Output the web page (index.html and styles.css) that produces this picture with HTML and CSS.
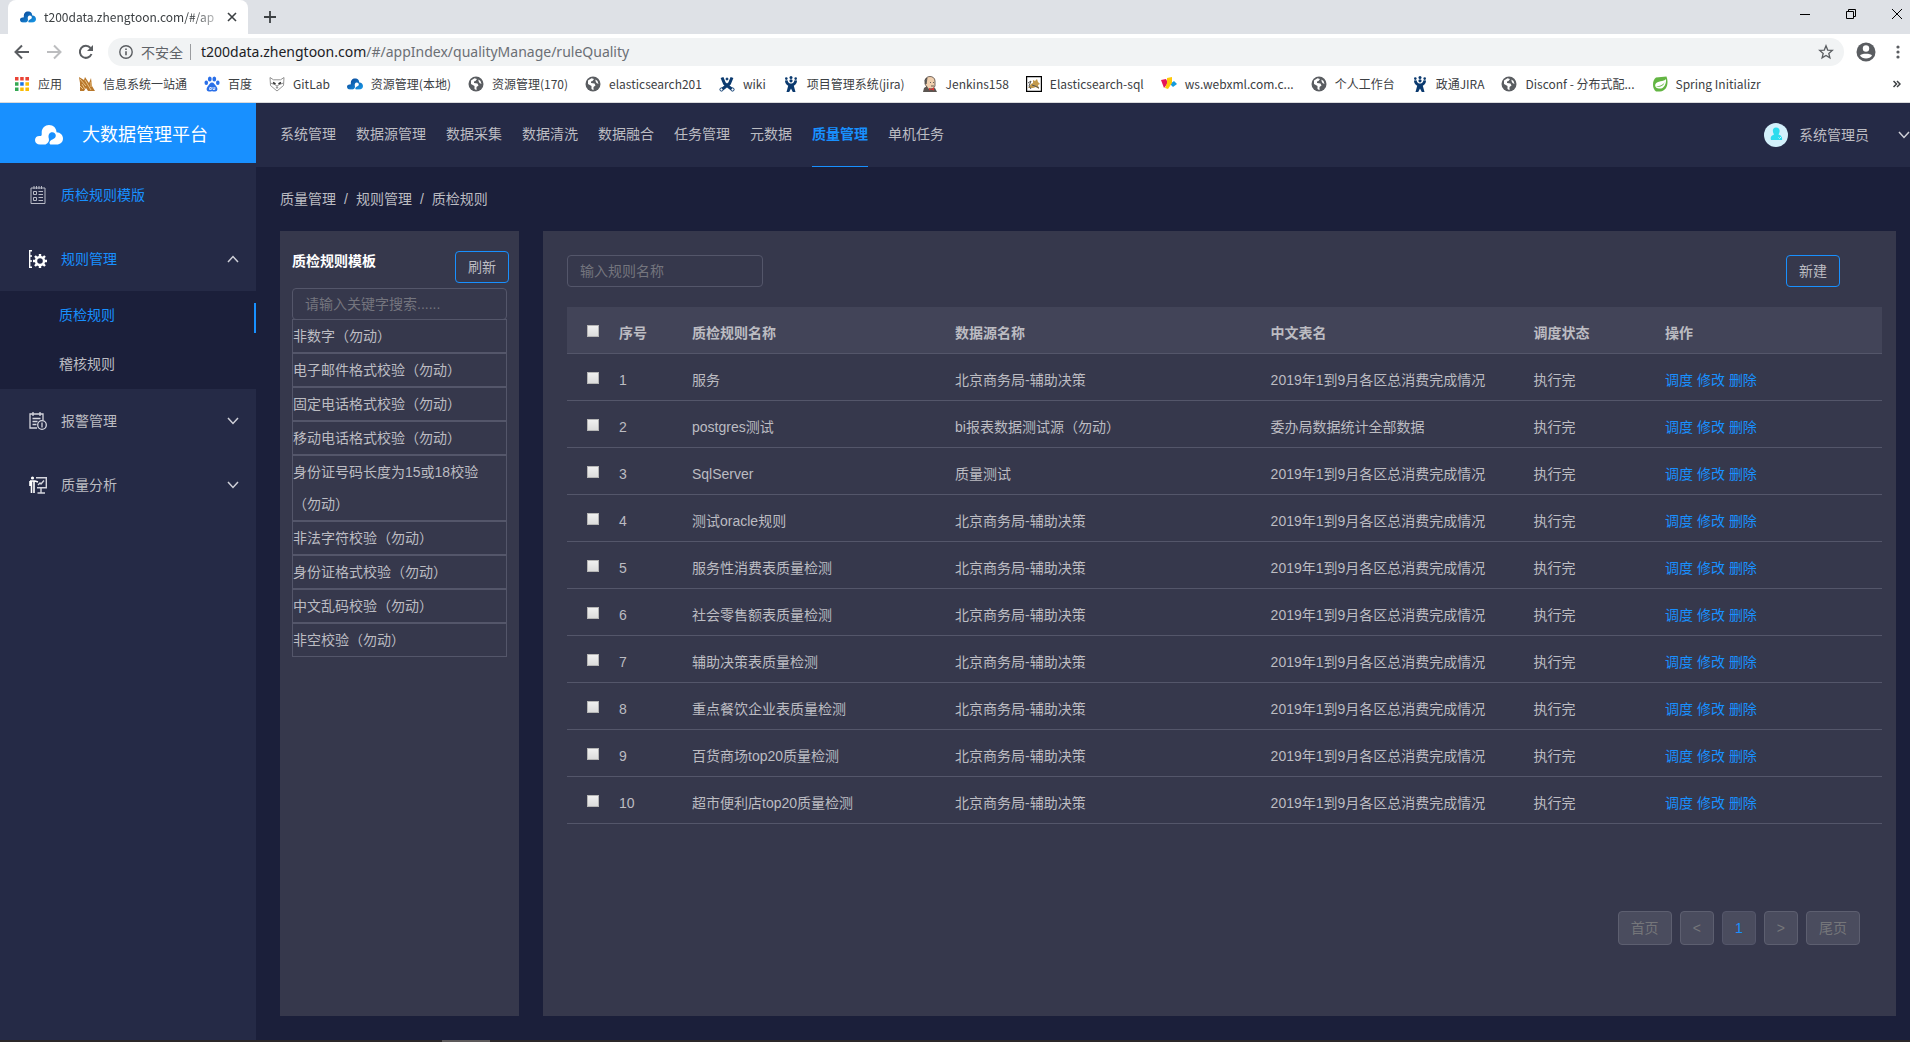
FILE: index.html
```html
<!DOCTYPE html>
<html lang="zh-CN">
<head>
<meta charset="utf-8">
<title>大数据管理平台</title>
<link rel="stylesheet" href="styles.css">
</head>
<body>
<svg class="defs" width="0" height="0" aria-hidden="true">
  <defs>
    <linearGradient id="blue" x1="0" y1="0" x2="1" y2="1"><stop offset="0" stop-color="#0b3f8f"/><stop offset="1" stop-color="#189bea"/></linearGradient>
    <symbol id="cloud" viewBox="0 0 28 20">
      <path fill-rule="evenodd" d="M14 0c4.400 0 7.500 3.200 7.500 7.200C25.500 7.500 28 10 28 13.500c0 3.500-2.500 6-6.500 6H5c-3 0-5-1.700-5-4.500c0-2.500 2-4.200 4.800-4c1.200 0 1.900-.5 1.900-1.500V7C7 3 10 0 14 0zM10.500 19.600c3-1.600 4-3.600 3.300-6.300c-1-3.500.8-6.300 3.700-6.100c3.200.3 4.300 3.800 2.300 5.800c-2 1.800-4.300 1.500-5.300 4.500c-.2.800.3 1.500 1 2.100z"/>
    </symbol>
    <symbol id="globe" viewBox="0 0 16 16">
      <circle cx="8" cy="8" r="7.500" fill="#5a5d61"/>
      <path d="M3 4.500L6.500 2.300L9 3L7.500 5L6 5.500V7l3.500.5l1 2L8.500 11v3.200L6.500 13V10L3 8zM10.500 3.500l2 1.500l1 3l-2-1l-1-2z" fill="#fff"/>
    </symbol>
    <symbol id="jira" viewBox="0 0 16 16">
      <g fill="#0b3a6f"><circle cx="3.300" cy="2.600" r="1.300"/><circle cx="8" cy="1.500" r="1.500"/><circle cx="12.700" cy="2.600" r="1.300"/><circle cx="8" cy="4.800" r="1.600"/>
      <path d="M2 4.500l2.500-.3C5 7 7 7.600 8 7.600S11 7 11.500 4.200l2.500.3c0 2.500-1 4-3.200 5.300L12.500 16H9.800L8 12.500L6.200 16H3.500l1.700-6.200C3 8.500 2 7 2 4.500z"/></g>
    </symbol>
    <symbol id="down" viewBox="0 0 12 8"><path d="M1 1l5 5.500L11 1" fill="none" stroke="currentColor" stroke-width="1.500"/></symbol>
  </defs>
</svg>
<div class="window">
  <div class="tabs">
    <div class="tab">
      <svg class="i16" viewBox="0 0 28 20" fill="url(#blue)"><use href="#cloud"/></svg>
      <span class="tab-title">t200data.zhengtoon.com/#/ap</span>
      <button class="plain" aria-label="关闭标签页"><svg width="10" height="10" viewBox="0 0 10 10"><path d="M1 1l8 8M9 1L1 9" stroke="#3c4043" stroke-width="1.600"/></svg></button>
    </div>
    <button class="plain" aria-label="新标签页"><svg width="12" height="12" viewBox="0 0 12 12"><path d="M6 0v12M0 6h12" stroke="#3c4043" stroke-width="1.800"/></svg></button>
    <div class="controls">
      <button class="plain" aria-label="最小化"><svg width="10" height="10" viewBox="0 0 10 10"><path d="M0 5.500h10" stroke="#000"/></svg></button>
      <button class="plain" aria-label="还原"><svg width="10" height="10" viewBox="0 0 10 10" fill="none" stroke="#000"><path d="M.5 2.500h7v7h-7zM2.500 2V.5h7v7H8"/></svg></button>
      <button class="plain" aria-label="关闭"><svg width="10" height="10" viewBox="0 0 10 10"><path d="M0 0l10 10M10 0L0 10" stroke="#000"/></svg></button>
    </div>
  </div>
  <div class="toolbar">
    <button class="plain" aria-label="后退"><svg width="16" height="16" viewBox="0 0 16 16" fill="none" stroke="#5a5d61" stroke-width="2"><path d="M15 8H2M8 1.500L1.500 8L8 14.500"/></svg></button>
    <button class="plain" aria-label="前进"><svg width="16" height="16" viewBox="0 0 16 16" fill="none" stroke="#bcbdbf" stroke-width="2"><path d="M1 8h13M8 1.500L14.500 8L8 14.500"/></svg></button>
    <button class="plain" aria-label="重新加载"><svg width="16" height="16" viewBox="0 0 16 16"><path d="M13.500 10A6 6 0 1 1 12.500 4" fill="none" stroke="#5a5d61" stroke-width="2"/><path d="M15 1v6H9z" fill="#5a5d61"/></svg></button>
    <div class="omnibox">
      <svg width="14" height="14" viewBox="0 0 14 14"><circle cx="7" cy="7" r="6.200" fill="none" stroke="#5a5d61" stroke-width="1.400"/><path d="M7 6.200v4M7 3.500v1.500" stroke="#5a5d61" stroke-width="1.600"/></svg>
      <span class="insecure">不安全</span>
      <span class="url"><b>t200data.zhengtoon.com</b>/#/appIndex/qualityManage/ruleQuality</span>
      <button class="plain star" aria-label="收藏"><svg width="16" height="16" viewBox="0 0 16 16"><path d="M8 1.800l1.700 4.300l4.600.3l-3.500 3l1.100 4.500L8 11.400l-3.900 2.500l1.100-4.500l-3.500-3l4.600-.3z" fill="none" stroke="#5a5d61" stroke-width="1.300"/></svg></button>
    </div>
    <button class="plain" aria-label="用户"><svg width="20" height="20" viewBox="0 0 20 20"><circle cx="10" cy="10" r="9.500" fill="#5a5d61"/><circle cx="10" cy="6.500" r="3.200" fill="#fff"/><path d="M4 13.500c1-2.500 11-2.500 12 0c-2 4-10 4-12 0z" fill="#fff"/></svg></button>
    <button class="plain" aria-label="菜单"><svg width="4" height="14" viewBox="0 0 4 14" fill="#5a5d61"><circle cx="2" cy="2" r="1.600"/><circle cx="2" cy="7" r="1.600"/><circle cx="2" cy="12" r="1.600"/></svg></button>
  </div>
  <nav class="bookmarks" aria-label="书签">
    <a href="#"><svg class="i16" viewBox="0 0 16 16"><path fill="#ea4335" d="M1 1h3.500v3.500H1zM6.200 1h3.500v3.500H6.200zM11.400 1H15v3.500h-3.600z"/><path fill="#34a853" d="M1 6.200h3.500v3.500H1zM1 11.400h3.500V15H1z"/><path fill="#1a73e8" d="M6.200 6.200h3.500v3.500H6.200z"/><path fill="#fbbc04" d="M11.400 6.200H15v3.500h-3.600zM6.200 11.400h3.500V15H6.200zM11.400 11.400H15V15h-3.600z"/></svg>应用</a>
    <a href="#"><svg class="i16" viewBox="0 0 16 16"><path d="M1 15V7L0 1l5 3L6 1l4 6l2-5l1 8l3 5H9L7 12l-2 3z" fill="#b9782b"/><path d="M1 3l6 7M3 8l3 5M6 4l6 10M12 6v5M1 10l3 3" stroke="#f4d6a0" stroke-width=".8"/></svg>信息系统一站通</a>
    <a href="#"><svg class="i16" viewBox="0 0 16 16" fill="#2a6fe8"><ellipse cx="5.800" cy="3" rx="1.900" ry="2.500"/><ellipse cx="10.300" cy="3" rx="1.900" ry="2.500"/><ellipse cx="2.300" cy="6.700" rx="1.800" ry="2.300"/><ellipse cx="13.800" cy="6.700" rx="1.800" ry="2.300"/><path d="M8 6.500c2 0 2.500 2 4 3.500s2.500 5-1 5.500c-1.500 0-2-.3-3-.3s-1.500.3-3 .3c-3.500-.5-2.500-4-1-5.500S6 6.500 8 6.500z"/><path d="M5.800 11.500h1.500v2H5.500zM9 11v2.500h1.800V11" fill="none" stroke="#fff" stroke-width=".8"/></svg>百度</a>
    <a href="#"><svg class="i16" viewBox="0 0 16 16" fill="none" stroke="#888" stroke-width=".9"><path d="M1 1.500l3.500 2.300h7L15 1.500l-.5 8L8 15L1.500 9.500zM1.500 7l4 1.500L8 10l2.500-1.500l4-1.500M7 11h2l-1 1.500z"/><path d="M4 6.500l2.500 1.500M12 6.500L9.500 8" stroke="#333" stroke-width="1.500"/></svg>GitLab</a>
    <a href="#"><svg class="i16" viewBox="0 0 28 20" fill="url(#blue)"><use href="#cloud"/></svg>资源管理(本地)</a>
    <a href="#"><svg class="i16"><use href="#globe"/></svg>资源管理(170)</a>
    <a href="#"><svg class="i16"><use href="#globe"/></svg>elasticsearch201</a>
    <a href="#"><svg class="i16" viewBox="0 0 16 16" fill="none" stroke="#0b3a6f"><path d="M3 1.500l2.500 6L12.500 13M13 1.500l-2.500 6L3.500 13" stroke-width="3"/><circle cx="2.500" cy="13.500" r="1.600"/><circle cx="13.500" cy="13.500" r="1.600"/><circle cx="8" cy="3" r="1" fill="#0b3a6f"/></svg>wiki</a>
    <a href="#"><svg class="i16"><use href="#jira"/></svg>项目管理系统(jira)</a>
    <a href="#"><svg class="i16" viewBox="0 0 16 16"><path d="M3 5c0-6 10-6 10 0v5l-2 3H6L3 8z" fill="#efcfae" stroke="#504641" stroke-width=".8"/><path d="M2 12l3-2l1 3l7-1l2 4H1z" fill="#5b5550"/><path d="M7 12l2 1l3-1.500v3L9 13.500l-2 1z" fill="#d33"/><path d="M3 4l2-2l-1 6zM8 6.500h1M11 6.500h1M9 10h3" stroke="#444" fill="#777" stroke-width=".8"/></svg>Jenkins158</a>
    <a href="#"><svg class="i16" viewBox="0 0 16 16"><path d="M.6.600h14.800v14.800H.6z" fill="#fff" stroke="#000" stroke-width="1.200"/><path d="M2 12l3-4l2-1V4l2 1l2-2l1 3l2 2l-2 1l1 4l-3-2l-3 1z" fill="#c39a4b"/><path d="M2 7l3-2l-2 5l2 3M6 9l3 1l4 2" fill="none" stroke="#555"/></svg>Elasticsearch-sql</a>
    <a href="#"><svg class="i16" viewBox="0 0 16 16"><path d="M0 4l5-1l2 4l-4 5z" fill="#e6145a"/><path d="M9 8l4-3l3 3l-4 3z" fill="#159bdc"/><path d="M6 2l5-1v6l-4 6l-3-1l2-5z" fill="#ffc80a"/></svg>ws.webxml.com.c...</a>
    <a href="#"><svg class="i16"><use href="#globe"/></svg>个人工作台</a>
    <a href="#"><svg class="i16"><use href="#jira"/></svg>政通JIRA</a>
    <a href="#"><svg class="i16"><use href="#globe"/></svg>Disconf - 分布式配...</a>
    <a href="#"><svg class="i16" viewBox="0 0 16 16"><path d="M4 1.500L14.500.5C17 7 15 15 8 15.500H4C0 13 0 4 4 1.500z" fill="#63b543"/><path d="M14 3C12 6 5 4.500 3.500 8S6 13 9 12.500S14.500 8 14 3z" fill="#fff"/><path d="M12.500 6c-1 3-5 4-8.500 4.500c4 1 8-.5 8.500-4.500z" fill="#63b543"/></svg>Spring Initializr</a>
    <button class="plain more" aria-label="更多书签"><svg width="8" height="8" viewBox="0 0 8 8" fill="none" stroke="#3c4043" stroke-width="1.500"><path d="M.5 1l3 3l-3 3M4 1l3 3l-3 3"/></svg></button>
  </nav>

  <div class="app">
    <aside class="sidebar">
      <div class="brand"><svg width="28" height="20" fill="#fff"><use href="#cloud"/></svg><span>大数据管理平台</span></div>
      <a class="menu on" href="#"><svg width="16" height="18" viewBox="0 0 16 18" fill="none" stroke="#b9bbc6"><path d="M1 2h14v15.500H1zM4 0v3M6.500 0v3M9 0v3M11.500 0v3M3.500 5.500h3v3h-3zM3.500 11.500h3v3h-3zM8.500 5.500H13M8.500 8.500H13M8.500 11.500H13M8.500 14.500H13"/></svg><span>质检规则模版</span></a>
      <a class="menu on" href="#"><svg width="18" height="18" viewBox="0 0 18 18" fill="none" stroke="#fff"><path d="M3 .7H.7v16.600H3M1 6h2M1 11h2" stroke-width="1.400"/><circle cx="11" cy="11" r="4" stroke-width="2.400"/><path d="M11 4v2.500M11 15.500V18M4 11h2.500M15.500 11H18M6 6l1.800 1.800M16 6l-1.800 1.800M6 16l1.800-1.800M16 16l-1.800-1.800" stroke-width="2.400"/></svg><span>规则管理</span><svg class="arrow up"><use href="#down"/></svg></a>
      <div class="sub">
        <a class="on" href="#">质检规则</a>
        <a href="#">稽核规则</a>
      </div>
      <a class="menu" href="#"><svg width="18" height="18" viewBox="0 0 18 18" fill="none" stroke="#d5d6de" stroke-width="1.300"><path d="M14 8V2H1v14h7M4 0v4M11 0v4M3.500 6.500h8M3.500 9.500h5M3.500 12.500h4"/><circle cx="13" cy="13" r="4.300"/><path d="M13 10.500v5"/></svg><span>报警管理</span><svg class="arrow"><use href="#down"/></svg></a>
      <a class="menu" href="#"><svg width="18" height="18" viewBox="0 0 18 18" fill="none" stroke="#d5d6de" stroke-width="1.400"><path d="M7 1.700h10.300v10H8M12 12v5M8.500 17H16M9 9l2-2l1 1l3-3.500"/><circle cx="3.500" cy="2" r="1.600" fill="#fff" stroke="none"/><path d="M1 5h5l3 1M2.500 5v12M5 5v12M1 5v5" stroke="#fff" stroke-width="1.600"/></svg><span>质量分析</span><svg class="arrow"><use href="#down"/></svg></a>
    </aside>
    <div class="main">
      <header class="header">
        <nav class="topnav">
          <a href="#">系统管理</a><a href="#">数据源管理</a><a href="#">数据采集</a><a href="#">数据清洗</a><a href="#">数据融合</a><a href="#">任务管理</a><a href="#">元数据</a><a class="on" href="#">质量管理</a><a href="#">单机任务</a>
        </nav>
        <button class="plain user"><svg width="24" height="24" viewBox="0 0 24 24"><circle cx="12" cy="12" r="12" fill="#d3f0fb"/><path d="M12 4.500c4 0 4.500 4 2.500 7c3 1 4 2.500 3.500 5.500H7c-1-3 .5-4.500 3-5.500c-2-3-1.500-7 2-7z" fill="#2cdcee"/><path d="M14.500 14.500l1 1l2-2" fill="none" stroke="#d3f0fb"/></svg><span>系统管理员</span><svg class="arrow"><use href="#down"/></svg></button>
      </header>
      <div class="crumbs"><a href="#">质量管理</a><span>/</span><a href="#">规则管理</a><span>/</span><span>质检规则</span></div>
      <div class="panels">
        <section class="panel templates">
          <div class="thead"><h2>质检规则模板</h2><button class="btn">刷新</button></div>
          <input class="field" type="text" placeholder="请输入关键字搜索......" aria-label="搜索模板">
          <ul>
            <li>非数字（勿动）</li><li>电子邮件格式校验（勿动）</li><li>固定电话格式校验（勿动）</li><li>移动电话格式校验（勿动）</li><li>身份证号码长度为15或18校验（勿动）</li><li>非法字符校验（勿动）</li><li>身份证格式校验（勿动）</li><li>中文乱码校验（勿动）</li><li>非空校验（勿动）</li>
          </ul>
        </section>
        <section class="panel rules">
          <div class="tools"><input class="field" type="text" placeholder="输入规则名称" aria-label="规则名称"><button class="btn">新建</button></div>
          <table>
            <colgroup><col class="c-check"><col class="c-no"><col class="c-name"><col class="c-src"><col class="c-table"><col class="c-state"><col></colgroup>
            <thead><tr><th><input type="checkbox" aria-label="全选"></th><th>序号</th><th>质检规则名称</th><th>数据源名称</th><th>中文表名</th><th>调度状态</th><th>操作</th></tr></thead>
            <tbody>
              <tr><td><input type="checkbox" aria-label="选择 1"></td><td>1</td><td>服务</td><td>北京商务局-辅助决策</td><td>2019年1到9月各区总消费完成情况</td><td>执行完</td><td><a href="#">调度</a> <a href="#">修改</a> <a href="#">删除</a></td></tr>
              <tr><td><input type="checkbox" aria-label="选择 2"></td><td>2</td><td>postgres测试</td><td>bi报表数据测试源（勿动）</td><td>委办局数据统计全部数据</td><td>执行完</td><td><a href="#">调度</a> <a href="#">修改</a> <a href="#">删除</a></td></tr>
              <tr><td><input type="checkbox" aria-label="选择 3"></td><td>3</td><td>SqlServer</td><td>质量测试</td><td>2019年1到9月各区总消费完成情况</td><td>执行完</td><td><a href="#">调度</a> <a href="#">修改</a> <a href="#">删除</a></td></tr>
              <tr><td><input type="checkbox" aria-label="选择 4"></td><td>4</td><td>测试oracle规则</td><td>北京商务局-辅助决策</td><td>2019年1到9月各区总消费完成情况</td><td>执行完</td><td><a href="#">调度</a> <a href="#">修改</a> <a href="#">删除</a></td></tr>
              <tr><td><input type="checkbox" aria-label="选择 5"></td><td>5</td><td>服务性消费表质量检测</td><td>北京商务局-辅助决策</td><td>2019年1到9月各区总消费完成情况</td><td>执行完</td><td><a href="#">调度</a> <a href="#">修改</a> <a href="#">删除</a></td></tr>
              <tr><td><input type="checkbox" aria-label="选择 6"></td><td>6</td><td>社会零售额表质量检测</td><td>北京商务局-辅助决策</td><td>2019年1到9月各区总消费完成情况</td><td>执行完</td><td><a href="#">调度</a> <a href="#">修改</a> <a href="#">删除</a></td></tr>
              <tr><td><input type="checkbox" aria-label="选择 7"></td><td>7</td><td>辅助决策表质量检测</td><td>北京商务局-辅助决策</td><td>2019年1到9月各区总消费完成情况</td><td>执行完</td><td><a href="#">调度</a> <a href="#">修改</a> <a href="#">删除</a></td></tr>
              <tr><td><input type="checkbox" aria-label="选择 8"></td><td>8</td><td>重点餐饮企业表质量检测</td><td>北京商务局-辅助决策</td><td>2019年1到9月各区总消费完成情况</td><td>执行完</td><td><a href="#">调度</a> <a href="#">修改</a> <a href="#">删除</a></td></tr>
              <tr><td><input type="checkbox" aria-label="选择 9"></td><td>9</td><td>百货商场top20质量检测</td><td>北京商务局-辅助决策</td><td>2019年1到9月各区总消费完成情况</td><td>执行完</td><td><a href="#">调度</a> <a href="#">修改</a> <a href="#">删除</a></td></tr>
              <tr><td><input type="checkbox" aria-label="选择 10"></td><td>10</td><td>超市便利店top20质量检测</td><td>北京商务局-辅助决策</td><td>2019年1到9月各区总消费完成情况</td><td>执行完</td><td><a href="#">调度</a> <a href="#">修改</a> <a href="#">删除</a></td></tr>
            </tbody>
          </table>
          <div class="pager"><button disabled>首页</button><button disabled>&lt;</button><button class="current">1</button><button disabled>&gt;</button><button disabled>尾页</button></div>
        </section>
      </div>
    </div>
  </div>
  <div class="taskbar"><span></span></div>
</div>
</body>
</html>
```

FILE: styles.css
```css
* { box-sizing: border-box; }
body {
  margin: 0;
  background: #fff;
  color: #bcbcc2;
  font: 14px/20px "Liberation Sans", "Noto Sans CJK SC", sans-serif;
}
a { color: inherit; text-decoration: none; }
svg { display: block; flex: none; }
.defs { position: absolute; }
.plain { display: flex; border: 0; padding: 0; background: none; color: inherit; font: inherit; }
.i16 { width: 16px; height: 16px; }

.window { display: flex; flex-direction: column; min-height: 100vh; padding: 0 10px 3px 0; }

/* browser chrome */
.tabs, .toolbar, .bookmarks { font-family: "Noto Sans CJK SC", sans-serif; color: #3c4043; }
.tabs { display: flex; align-items: center; gap: 16px; height: 34px; padding-left: 8px; background: #dee1e6; }
.tab { display: flex; align-items: center; gap: 8px; width: 240px; height: 34px; padding: 0 11px 0 12px; background: #fff; border-radius: 8px 8px 0 0; font-size: 12px; }
.tab-title { flex: 1; white-space: nowrap; mask-image: linear-gradient(to right, #000 85%, rgba(0, 0, 0, .2)); }
.controls { display: flex; gap: 36px; margin: 0 8px 6px auto; }
.toolbar { display: flex; align-items: center; gap: 16px; padding: 4px 10px 0 14px; }
.omnibox { display: flex; align-items: center; flex: 1; height: 28px; margin: 0 -4px 0 -2px; padding: 0 10px 0 11px; border-radius: 14px; background: #f1f3f4; }
.omnibox + .plain { margin-right: 4px; }
.insecure { margin-left: 8px; padding-right: 7px; border-right: 1px solid #9a9c9f; line-height: 16px; color: #5f6368; }
.url { margin-left: 10px; color: #6b6f74; font: 14px/20px "Noto Sans", sans-serif; }
.url b { color: #202124; font-weight: 400; }
.star { margin-left: auto; }
.bookmarks { display: flex; align-items: center; gap: 17px; height: 37px; padding: 0 9px 0 14px; border-bottom: 1px solid #d9dadc; font-size: 12px; white-space: nowrap; }
.bookmarks a { display: flex; align-items: center; gap: 8px; }
.more { margin-left: auto; }

/* application */
.app { display: flex; flex: 1; background: #1b1f3a; }
.sidebar { flex: none; width: 256px; background: #252a46; }
.brand { display: flex; align-items: center; gap: 19px; height: 60px; padding: 4px 35px 0; background: #1890ff; color: #fff; font-size: 18px; }
.menu { display: flex; align-items: center; height: 64px; padding: 0 17px 0 29px; }
.menu > svg:first-child { width: 18px; }
.menu span { flex: 1; margin-left: 14px; }
.menu.on span { color: #1890ff; }
.arrow { width: 12px; height: 8px; color: #cfd0d8; }
.up { transform: rotate(180deg); }
.sub { background: #1b1f3a; }
.sub a { display: flex; align-items: center; height: 49px; padding: 0 0 2px 59px; }
.sub .on { color: #1890ff; background: linear-gradient(#1890ff, #1890ff) right 12px / 2px 30px no-repeat; }
.main { display: flex; flex: 1; flex-direction: column; min-width: 0; }
.header { display: flex; justify-content: space-between; height: 64px; padding-left: 24px; background: #252a46; }
.topnav { display: flex; gap: 20px; line-height: 63px; }
.topnav .on { color: #1890ff; font-weight: 700; border-bottom: 1px solid #1890ff; }
.user { align-items: center; gap: 11px; }
.user .arrow { margin-left: 18px; }
.crumbs { display: flex; gap: 8px; padding: 22px 24px; }
.panels { display: flex; flex: 1; gap: 24px; padding: 0 14px 24px 24px; }
.panel { background: #36384c; }
.templates { flex: none; width: 239px; padding: 20px 12px; }
.thead { display: flex; justify-content: space-between; margin: 0 -2px 5px 0; }
h2 { margin: 0; color: #fff; font-size: 14px; line-height: 20px; }
.btn { width: 54px; height: 32px; padding: 0; border: 1px solid #1890ff; border-radius: 4px; background: none; color: inherit; font: inherit; }
.field { display: block; width: 196px; height: 32px; padding: 0 12px; border: 1px solid #54566a; border-radius: 4px; background: none; color: inherit; font: inherit; }
.field::placeholder { color: #74757e; opacity: 1; }
.templates .field { width: 100%; }
ul { margin: -1px 0 0; padding: 0; list-style: none; line-height: 32px; }
li { border: 1px solid #54566a; }
.rules { flex: 1; min-width: 0; padding: 24px 14px 24px 24px; }
.tools { display: flex; justify-content: space-between; margin: 0 42px 20px 0; }
table { width: 100%; border-collapse: separate; border-spacing: 0; table-layout: fixed; }
th, td { height: 47px; padding: 6px 0 0; border-bottom: 1px solid #54566a; text-align: left; }
thead { background: #424458; }
td a { color: #1890ff; }
th:first-child, td:first-child { padding: 2px 0 0 20px; }
.c-check { width: 52px; }
.c-no { width: 73px; }
.c-name { width: 20%; }
.c-src { width: 24%; }
.c-table { width: 20%; }
.c-state { width: 10%; }
[type="checkbox"] { display: block; width: 12px; height: 12px; margin: 0; appearance: none; border: 1px solid #b5b5b5; background: linear-gradient(#f0f0f0, #dcdcdc); }
.pager { display: flex; justify-content: flex-end; gap: 8px; margin: 87px 22px 0 0; }
.pager button { min-width: 34px; height: 34px; padding: 0 12px; border: 1px solid #5d5f70; border-radius: 4px; background: #4a4c5e; color: #75767a; font: inherit; }
.pager .current { border-color: #54566a; color: #1890ff; }
.taskbar { height: 2px; padding-left: 442px; background: #2b2829; }
.taskbar span { display: block; width: 48px; height: 2px; background: #5d5a5b; }
```
